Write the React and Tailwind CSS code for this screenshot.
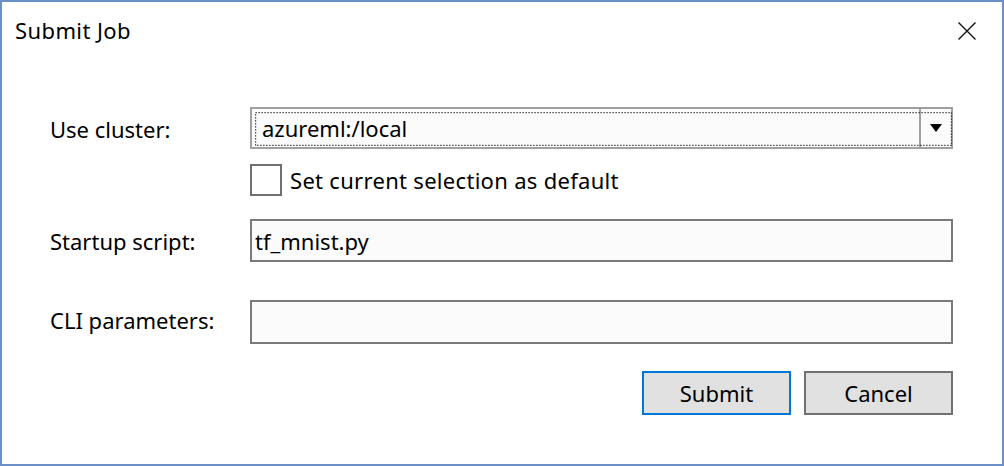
import React, { useState } from "react";

const font = { fontFamily: '"Noto Sans", "Open Sans", sans-serif' };

function CloseIcon() {
  return (
    <svg width="20" height="20" viewBox="0 0 20 20" fill="none">
      <path d="M1.5 1.5 L18.5 18.5 M18.5 1.5 L1.5 18.5" stroke="#111" strokeWidth="1.4" />
    </svg>
  );
}

function FocusRect() {
  // dotted focus rectangle drawn over the combobox
  return (
    <svg className="absolute inset-[3px] pointer-events-none" width="697" height="34">
      <rect
        x="0.5"
        y="0.5"
        width="696"
        height="33"
        fill="none"
        stroke="#222"
        strokeWidth="1.4"
        strokeDasharray="1.2 1.8"
      />
    </svg>
  );
}

export default function App() {
  const [isDefault, setIsDefault] = useState(false);

  return (
    <div
      className="w-[1004px] h-[466px] bg-white border-2 border-[#6b8fc7] flex flex-col text-[22px] text-black leading-none"
      style={font}
    >
      {/* Title bar */}
      <div className="h-[58px] flex items-center justify-between pl-[13px] pr-[25px] shrink-0">
        <span className="text-[22px] tracking-[0.4px] -mt-[3px]">Submit Job</span>
        <button className="w-[20px] h-[20px] flex items-center justify-center">
          <CloseIcon />
        </button>
      </div>

      {/* Form */}
      <div className="flex flex-col pl-[48px] pr-[49px] pt-[47px]">
        <div className="grid grid-cols-[200px_1fr] items-center">
          <span className="pt-[2px]">Use cluster:</span>
          <div className="relative h-[42px] border-2 border-[#a0a0a0] bg-[#fbfbfb] flex items-stretch">
            <div className="flex-1 flex items-center pl-[10px]">azureml:/local</div>
            <div className="w-[32px] border-l-2 border-[#a0a0a0] flex items-center justify-center">
              <svg width="12" height="8" viewBox="0 0 12 8">
                <path d="M0 0 H12 L6 8 Z" fill="#000" />
              </svg>
            </div>
            <FocusRect />
          </div>
        </div>

        <div className="grid grid-cols-[200px_1fr] items-center mt-[15px]">
          <span />
          <label className="flex items-center gap-[8px]">
            <span
              className="w-[32px] h-[32px] border-2 border-[#707070] bg-white flex items-center justify-center"
              onClick={() => setIsDefault(!isDefault)}
            >
              {isDefault && <span className="text-[18px]">✓</span>}
            </span>
            <span className="tracking-[0.3px]">Set current selection as default</span>
          </label>
        </div>

        <div className="grid grid-cols-[200px_1fr] items-center mt-[23px]">
          <span>Startup script:</span>
          <div className="h-[43px] border-2 border-[#7a7a7a] bg-[#fbfbfb] flex items-center pl-[3px]">
            tf_mnist.py
          </div>
        </div>

        <div className="grid grid-cols-[200px_1fr] items-center mt-[38px]">
          <span className="pb-[4px]">CLI parameters:</span>
          <div className="h-[44px] border-2 border-[#7a7a7a] bg-[#fbfbfb]" />
        </div>

        <div className="flex justify-end gap-[13px] mt-[27px]">
          <button className="w-[149px] h-[44px] bg-[#e1e1e1] border-2 border-[#0078d7]">
            Submit
          </button>
          <button className="w-[149px] h-[44px] bg-[#e1e1e1] border-2 border-[#707070]">
            Cancel
          </button>
        </div>
      </div>
    </div>
  );
}
